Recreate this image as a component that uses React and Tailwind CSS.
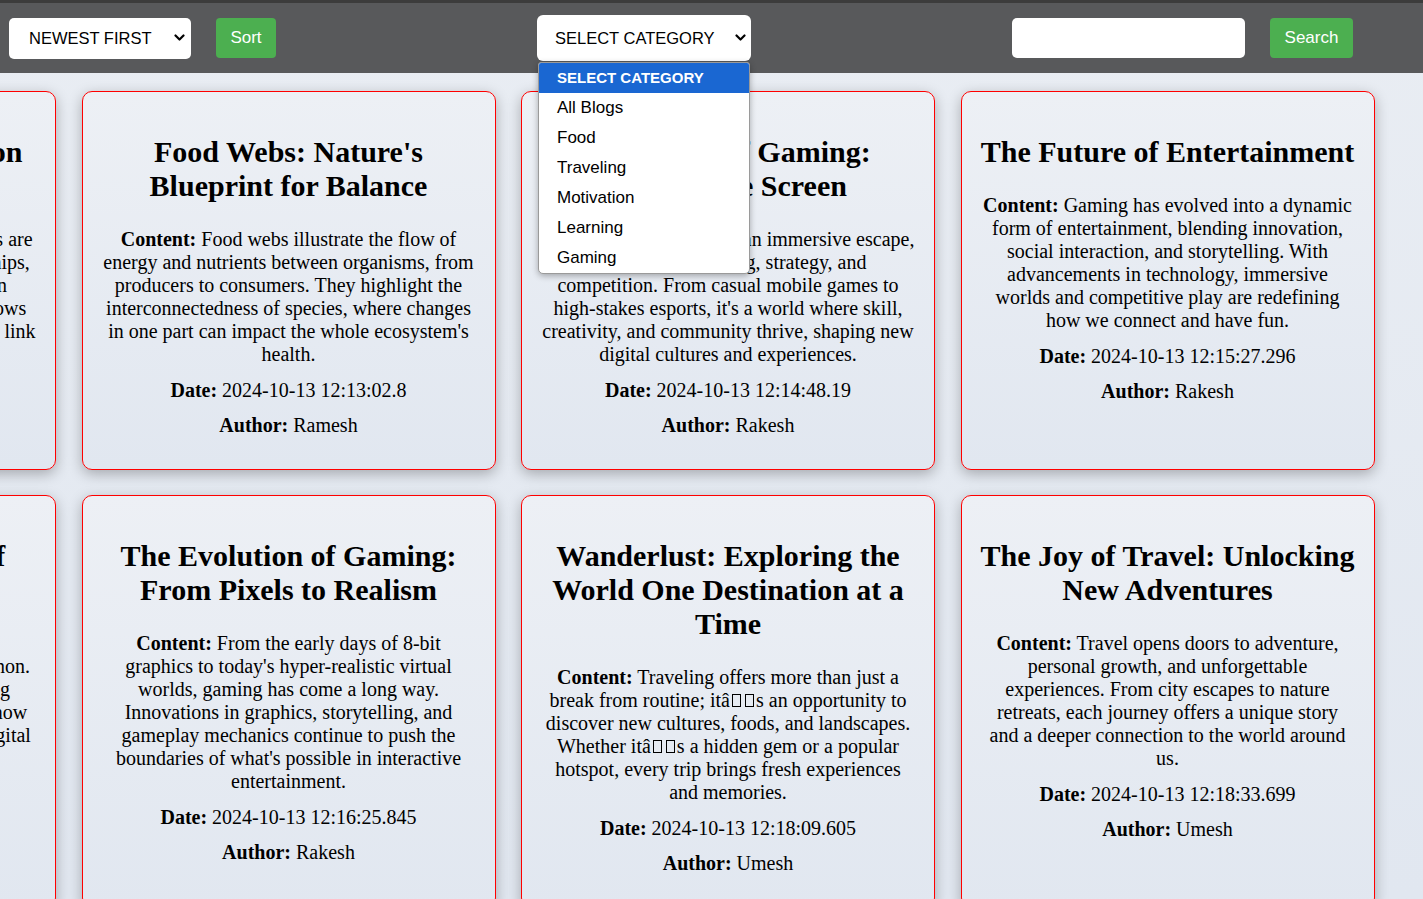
import React from "react";

const Chevron = () => (
  <svg width="11" height="8" viewBox="0 0 11 8" fill="none" className="shrink-0">
    <path d="M1.5 1.5L5.5 5.5L9.5 1.5" stroke="#000" strokeWidth="2.2" strokeLinecap="round" strokeLinejoin="round" />
  </svg>
);

const Box = () => <span className="mx-[2px] inline-block h-[13px] w-[9px] border border-black align-baseline" />;

const Card = ({ title, content, date, author }) => (
  <div className="flex flex-col rounded-[10px] border border-[#ff0000] bg-gradient-to-b from-[#edf0f5] to-[#e1e7f0] px-[19px] pt-5 pb-8 text-center text-black shadow-[0_4px_14px_rgba(0,0,0,0.28)]">
    <h2 className="mt-[23px] mb-[25px] text-[30px] font-bold leading-[34px]">{title}</h2>
    <p className="text-[20px] leading-[23px]">
      <b>Content:</b> {content}
    </p>
    <p className="mt-[13px] text-[20px] leading-[23px]">
      <b>Date:</b> {date}
    </p>
    <p className="mt-3 text-[20px] leading-[23px]">
      <b>Author:</b> {author}
    </p>
  </div>
);

const cards = [
  {
    title: "The Ecosystem Connection Explained",
    content: (
      <>
        Ecosystems thrive when species are
        <br />
        closely bound together through relationships,
        <br />
        from predators and prey to the plants in
        <br />
        the soil beneath them. Energy steadily flows
        <br />
        through every single level, forming a vital link
        <br />
        between all living things.
      </>
    ),
    date: "2024-10-13 12:12:40.45",
    author: "Suresh",
  },
  {
    title: "Food Webs: Nature's Blueprint for Balance",
    content:
      "Food webs illustrate the flow of energy and nutrients between organisms, from producers to consumers. They highlight the interconnectedness of species, where changes in one part can impact the whole ecosystem's health.",
    date: "2024-10-13 12:13:02.8",
    author: "Ramesh",
  },
  {
    title: "The Thrill of Gaming: Beyond the Screen",
    content:
      "Gaming offers an immersive escape, blending storytelling, strategy, and competition. From casual mobile games to high-stakes esports, it's a world where skill, creativity, and community thrive, shaping new digital cultures and experiences.",
    date: "2024-10-13 12:14:48.19",
    author: "Rakesh",
  },
  {
    title: "The Future of Entertainment",
    content:
      "Gaming has evolved into a dynamic form of entertainment, blending innovation, social interaction, and storytelling. With advancements in technology, immersive worlds and competitive play are redefining how we connect and have fun.",
    date: "2024-10-13 12:15:27.296",
    author: "Rakesh",
  },
  {
    title: "The Enduring Impact of Online Learning",
    content: (
      <>
        Technology has reshaped
        <br />
        modern education into a global phenomenon.
        <br />
        Online platforms make lifelong learning
        <br />
        accessible to anyone, anywhere, as we know
        <br />
        it, reshaping careers in an increasingly digital
        <br />
        world of work.
      </>
    ),
    date: "2024-10-13 12:15:58.12",
    author: "Suresh",
  },
  {
    title: "The Evolution of Gaming: From Pixels to Realism",
    content:
      "From the early days of 8-bit graphics to today's hyper-realistic virtual worlds, gaming has come a long way. Innovations in graphics, storytelling, and gameplay mechanics continue to push the boundaries of what's possible in interactive entertainment.",
    date: "2024-10-13 12:16:25.845",
    author: "Rakesh",
  },
  {
    title: "Wanderlust: Exploring the World One Destination at a Time",
    content: (
      <>
        Traveling offers more than just a break from routine; it{"\u00e2"}
        <Box />
        <Box />s an opportunity to discover new cultures, foods, and landscapes. Whether it{"\u00e2"}
        <Box />
        <Box />s a hidden gem or a popular hotspot, every trip brings fresh experiences and memories.
      </>
    ),
    date: "2024-10-13 12:18:09.605",
    author: "Umesh",
  },
  {
    title: "The Joy of Travel: Unlocking New Adventures",
    content:
      "Travel opens doors to adventure, personal growth, and unforgettable experiences. From city escapes to nature retreats, each journey offers a unique story and a deeper connection to the world around us.",
    date: "2024-10-13 12:18:33.699",
    author: "Umesh",
  },
];

const options = ["All Blogs", "Food", "Traveling", "Motivation", "Learning", "Gaming"];

export default function App() {
  return (
    <div className="h-[899px] w-full overflow-hidden bg-gradient-to-b from-[#e9edf3] to-[#e1e7f0] font-['Liberation_Serif',serif]">
      <div className="h-[3px] bg-[#3c3c3c]" />
      <header className="relative z-10 flex h-[70px] items-center bg-[#58595b] pl-[9px] font-['Liberation_Sans',Arial,sans-serif] text-[16px]">
        <div className="flex h-[41px] w-[182px] items-center justify-between rounded-[5px] bg-white pl-5 pr-[6px] text-black">
          <span className="text-[16.5px]">NEWEST FIRST</span>
          <Chevron />
        </div>
        <button className="ml-[25px] h-[40px] w-[60px] rounded-[4px] bg-[#4caf50] text-[17px] text-white">Sort</button>
        <div className="relative ml-[261px]">
          <div className="flex h-[46px] w-[214px] items-center justify-between rounded-[6px] bg-white pl-[18px] pr-[5px] text-black">
            <span className="text-[16.5px]">SELECT CATEGORY</span>
            <Chevron />
          </div>
          <div className="absolute left-[1px] top-[47px] w-[212px] overflow-hidden rounded-b-[5px] rounded-t-[3px] border border-[#9a9a9a] bg-white shadow-[0_2px_6px_rgba(0,0,0,0.3)]">
            <div className="flex h-[30px] items-center bg-[#1a67d2] pl-[18px] text-[15px] font-bold text-white">SELECT CATEGORY</div>
            {options.map((o) => (
              <div key={o} className="flex h-[30px] items-center pl-[18px] text-[17px] text-black">
                {o}
              </div>
            ))}
          </div>
        </div>
        <input className="ml-[261px] h-[40px] w-[233px] rounded-[5px] bg-white px-2 text-black outline-none" />
        <button className="ml-[25px] h-[40px] w-[83px] rounded-[4px] bg-[#4caf50] text-[17px] text-white">Search</button>
      </header>
      <main className="pt-[18px]">
        <div className="ml-[-358px] grid grid-cols-[repeat(4,414px)] gap-x-[25.5px] gap-y-[25px]">
          {cards.map((c, i) => (
            <Card key={i} {...c} />
          ))}
        </div>
      </main>
    </div>
  );
}
